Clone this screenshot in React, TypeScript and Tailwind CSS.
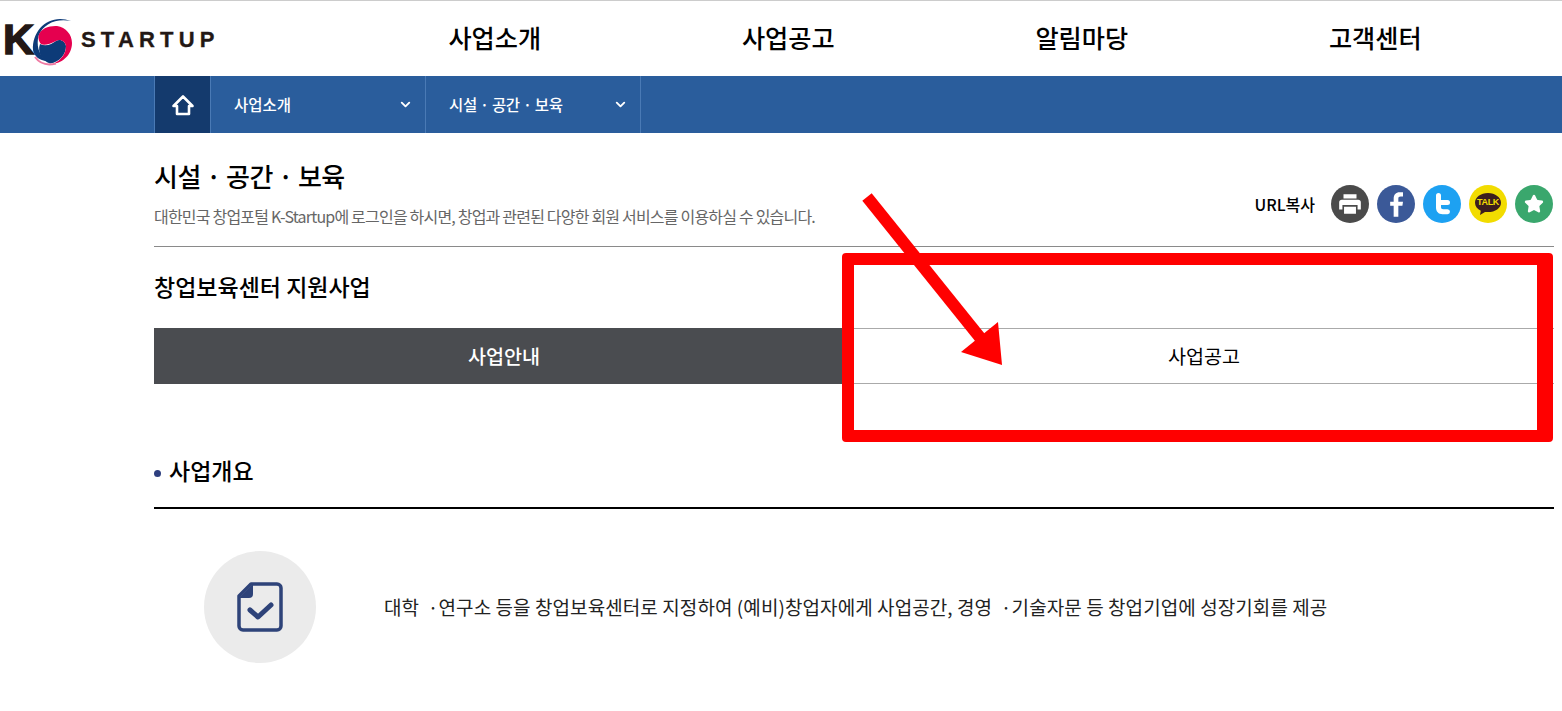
import { ChevronDown, Star } from "lucide-react";

const FONT = "font-['Noto_Sans_CJK_KR','Noto_Sans',sans-serif]";

function Logo() {
  return (
    <div className="flex items-center w-[348px] shrink-0 pl-[4px] h-full">
      <div className="relative w-[72px] h-[60px] shrink-0 -ml-[4px]">
        <span className="absolute left-[3px] top-[6px] text-[43px] leading-[48px] font-black text-[#231815] [-webkit-text-stroke:1.5px_#231815] font-['Liberation_Sans',sans-serif]">
          K
        </span>
        <svg viewBox="0 8 72 60" className="absolute left-0 top-0 w-[72px] h-[60px]">
          <circle cx="53" cy="41" r="21" fill="#fff" />
          <path d="M33 49 C32 28 50 12 71 20 C56 17 43 23 38.500 35 C36.500 44 38 52 46 60 C39 59 34 55 33 49Z" fill="#0d3b78" />
          <path d="M40 43 C46 46 52 43 56 40 C60 37.500 65 40 66 45 C66 53 60 61 50 62.500 C42 60 37 51 40 43Z" fill="#0d3b78" />
          <path d="M38.500 35 C40 27 50 24.500 57 25 C66 26 72 34 72 42 C72 54 62 62 54 62.500 C61 59 66 53 66 45 C65 40 60 37.500 56 40 C50 43 44 45 41 43 C39 41 38 37 38.500 35Z" fill="#e5004f" />
          <path d="M35 56 C40 63 48 64.500 56 62.500" fill="none" stroke="#ef7aa3" strokeWidth="2" />
        </svg>
      </div>
      <span className="ml-[9px] mt-[2px] text-[22px] leading-none font-bold tracking-[5.200px] text-[#231815] [-webkit-text-stroke:0.3px_#231815] font-['Liberation_Sans',sans-serif]">
        STARTUP
      </span>
    </div>
  );
}

function ShareIcons() {
  return (
    <div className="flex items-center">
      <span className="mr-4 text-[16px] font-medium text-black">URL복사</span>
      <div className="flex gap-[8px]">
        <div className="w-[38px] h-[38px] rounded-full bg-[#4a4a4a] flex items-center justify-center">
          <svg viewBox="0 0 24 24" className="w-[26px] h-[26px]" fill="#fff">
            <path d="M6 3h12v4H6zM4.500 8h15A2.500 2.500 0 0 1 22 10.500V17h-3v-4H5v4H2v-6.500A2.500 2.500 0 0 1 4.500 8zM6.500 14.500h11V21h-11z" />
          </svg>
        </div>
        <div className="w-[38px] h-[38px] rounded-full bg-[#3b5998] flex items-center justify-center">
          <svg viewBox="0 0 24 24" className="w-[28px] h-[28px]" fill="#fff">
            <path d="M10 23V13.500H7V10h3V7.500C10 4 12 2 15 2h3v3.500h-2c-1.500 0-2 .7-2 2V10h4l-.5 3.500H14V23z" />
          </svg>
        </div>
        <div className="w-[38px] h-[38px] rounded-full bg-[#1da1f2] flex items-center justify-center">
          <svg viewBox="0 0 24 24" className="w-[24px] h-[24px]" fill="#fff">
            <path d="M6 3.500a2.500 2.500 0 0 1 5 0V8h6.500a2.500 2.500 0 0 1 0 5H11v2c0 1.500.8 2.200 2.200 2.200h4.300a2.500 2.500 0 0 1 0 5h-5C8.500 22.200 6 19.500 6 15.500z" />
          </svg>
        </div>
        <div className="w-[38px] h-[38px] rounded-full bg-[#f2dc00] flex items-center justify-center relative">
          <svg viewBox="0 0 28 24" className="w-[28px] h-[24px]" fill="#3c1e1e">
            <path d="M14 1C6.800 1 1 5.300 1 10.700c0 3.400 2.300 6.400 5.800 8.100L6 23l5-3.100c1 .2 2 .2 3 .2 7.200 0 13-4.200 13-9.400S21.200 1 14 1z" />
          </svg>
          <span className="absolute left-0 right-0 top-[12px] text-center text-[9px] leading-[10px] tracking-[-0.3px] font-bold text-[#f2dc00] font-['Liberation_Sans',sans-serif]">
            TALK
          </span>
        </div>
        <div className="w-[38px] h-[38px] rounded-full bg-[#3aa76d] flex items-center justify-center">
          <Star size={20} fill="#fff" color="#fff" />
        </div>
      </div>
    </div>
  );
}

export default function App() {
  return (
    <div className={`relative w-[1562px] h-[711px] overflow-hidden bg-white ${FONT}`}>
      <header className="h-[76px] border-t border-[#cccccc] flex items-center">
        <Logo />
        <nav className="flex w-[1174px] -mt-[2px] text-[25.200px] font-medium text-black">
          <a className="flex-1 text-center">사업소개</a>
          <a className="flex-1 text-center">사업공고</a>
          <a className="flex-1 text-center">알림마당</a>
          <a className="flex-1 text-center">고객센터</a>
        </nav>
      </header>

      <div className="h-[57px] bg-[#2a5d9c] pl-[154px] flex text-white text-[15.500px] font-medium">
        <div className="w-[57px] bg-[#143a6d] border-x border-[#4a7ab5] flex items-center justify-center">
          <svg viewBox="0 0 24 24" className="w-[24px] h-[24px]" fill="none" stroke="#fff" strokeWidth="2.600">
            <path d="M2.500 13 12 3.500 21.500 13H18v8H6v-8z" strokeLinejoin="round" />
          </svg>
        </div>
        <div className="w-[215px] border-r border-[#4a7ab5] flex items-center justify-between pl-[23px] pr-[12px]">
          <span>사업소개</span>
          <ChevronDown size={15} strokeWidth={3} />
        </div>
        <div className="w-[215px] border-r border-[#4a7ab5] flex items-center justify-between pl-[23px] pr-[12px]">
          <span className="tracking-[-0.3px]">시설 · 공간 · 보육</span>
          <ChevronDown size={15} strokeWidth={3} />
        </div>
      </div>

      <main className="ml-[154px] w-[1400px]">
        <div className="h-[114px] border-b border-[#8a8a8a] flex items-start justify-between">
          <div className="pt-[23px]">
            <h1 className="text-[26px] leading-[40px] tracking-[-0.5px] font-medium text-black">시설 · 공간 · 보육</h1>
            <p className="mt-[9px] text-[16px] leading-[22px] tracking-[-0.8px] text-[#666666]">
              대한민국 창업포털 K-Startup에 로그인을 하시면, 창업과 관련된 다양한 회원 서비스를 이용하실 수 있습니다.
            </p>
          </div>
          <div className="pt-[52px] pr-[1px]">
            <ShareIcons />
          </div>
        </div>

        <h2 className="mt-[22px] text-[23px] leading-[34px] font-medium text-black">창업보육센터 지원사업</h2>

        <div className="mt-[25px] flex h-[56px] text-[19.600px] font-medium">
          <div className="w-1/2 bg-[#4a4c50] text-white flex items-center justify-center">사업안내</div>
          <div className="w-1/2 border-y border-[#aaaaaa] text-black flex items-center justify-center font-normal">사업공고</div>
        </div>

        <div className="mt-[68px] h-[57px] border-b-2 border-black flex items-start">
          <span className="mt-[18px] w-[7px] h-[7px] rounded-full bg-[#2e3f7f]" />
          <h3 className="ml-[8px] text-[23px] leading-[34px] font-medium text-black mt-[1px]">사업개요</h3>
        </div>

        <div className="mt-[42px] flex items-center pl-[50px]">
          <div className="w-[112px] h-[112px] rounded-full bg-[#ebebeb] flex items-center justify-center">
            <svg viewBox="0 0 46 50" className="w-[46px] h-[50px]" fill="none">
              <path d="M14 2H40a4 4 0 0 1 4 4V44a4 4 0 0 1-4 4H6a4 4 0 0 1-4-4V14z" stroke="#2e4379" strokeWidth="3.500" strokeLinejoin="round" />
              <path d="M16 2V12a4 4 0 0 1-4 4H2z" fill="#2e4379" />
              <path d="M13 28l8 7 13-12" stroke="#2e4379" strokeWidth="5" strokeLinecap="round" strokeLinejoin="round" />
            </svg>
          </div>
          <p className="ml-[68px] text-[19px] tracking-[0.08px] text-[#222222]">
            대학 &nbsp;·연구소 등을 창업보육센터로 지정하여 (예비)창업자에게 사업공간, 경영 &nbsp;·기술자문 등 창업기업에 성장기회를 제공
          </p>
        </div>
      </main>

      {/* red annotation painted over the screenshot */}
      <div className="absolute left-[842px] top-[253px] w-[711px] h-[189px] border-y-[12px] border-l-[12px] border-r-[16px] border-[#ff0000] rounded-[4px]" />
      <svg className="absolute left-0 top-0 w-[1562px] h-[711px] pointer-events-none" viewBox="0 0 1562 711">
        <path d="M867 197 L986 345" stroke="#ff0000" strokeWidth="12" />
        <path d="M998 322 L1002 365 L961 352 Z" fill="#ff0000" />
      </svg>
    </div>
  );
}
